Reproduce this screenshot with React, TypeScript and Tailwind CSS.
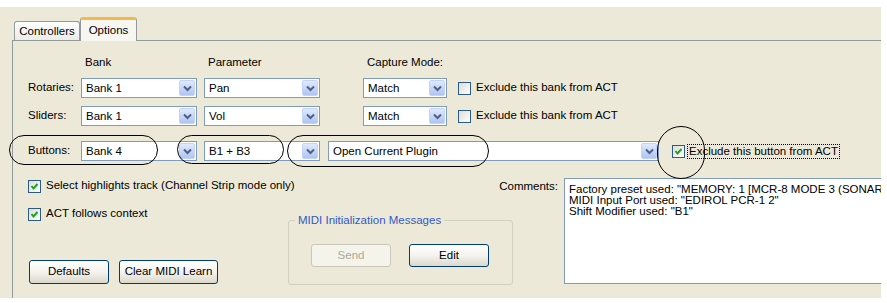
import React from "react";

function Arrow() {
  return (
    <div className="flex h-full w-[16px] items-center justify-center rounded-[2px] border border-[#C3D3FD] bg-gradient-to-b from-[#E1EAFE] to-[#AFC4F2]">
      <svg width="9" height="7" viewBox="0 0 9 7">
        <path d="M1 1.5 L4.5 5 L8 1.5" fill="none" stroke="#4D6185" strokeWidth="2" />
      </svg>
    </div>
  );
}

function Combo({ className, text }: { className: string; text: string }) {
  return (
    <div className={"flex h-[20px] shrink-0 items-stretch border border-[#7F9DB9] bg-white p-px " + className}>
      <span className="flex-1 pl-[3px] leading-[16px] whitespace-nowrap">{text}</span>
      <Arrow />
    </div>
  );
}

function Check({ checked }: { checked?: boolean }) {
  return (
    <div className="flex h-[13px] w-[13px] shrink-0 items-center justify-center border border-[#2D5B85] bg-gradient-to-br from-[#DCDCD7] to-white">
      {checked && (
        <svg width="9" height="9" viewBox="0 0 9 9">
          <path d="M1.5 4 L3.5 6.5 L7.5 2" stroke="#21A121" strokeWidth="2" fill="none" />
        </svg>
      )}
    </div>
  );
}

function Btn({ className, children }: { className: string; children: React.ReactNode }) {
  return (
    <div
      className={
        "flex shrink-0 items-center justify-center rounded-[3px] border border-[#003C74] bg-gradient-to-b from-white via-[#F4F3EE] to-[#DCD8CC] " +
        className
      }
    >
      {children}
    </div>
  );
}

export default function App() {
  return (
    <div className="relative h-[303px] w-[887px] overflow-hidden bg-white font-['Liberation_Sans',Arial,sans-serif] text-[11.5px] text-black">
      <div className="mt-[7px] flex h-[291px] w-[881px] flex-col overflow-hidden bg-[#ECE9D8]">
        {/* tabs */}
        <div className="flex h-[33px] shrink-0 items-end pl-[14px] pt-[10px]">
          <div className="flex h-[19px] w-[66px] items-center justify-center rounded-t-[3px] border border-b-0 border-[#919B9C] bg-gradient-to-b from-white to-[#ECEBE6] leading-[14px]">
            Controllers
          </div>
          <div className="relative z-10 -mb-px flex h-[24px] w-[57px] items-start justify-center rounded-t-[3px] border-x border-t-[3px] border-x-[#919B9C] border-t-[#F5B94A] bg-[#F7F6F1] pt-[3px] leading-[14px]">
            Options
          </div>
        </div>
        {/* pane */}
        <div className="ml-[12px] flex-1 border-l border-t border-[#919B9C] pl-[15px] pt-[14px]">
          {/* headers */}
          <div className="flex h-[14px] leading-[14px]">
            <div className="w-[53px] shrink-0" />
            <div className="w-[116px] shrink-0 pl-[4px]">Bank</div>
            <div className="ml-[7px] w-[116px] shrink-0 pl-[4px]">Parameter</div>
            <div className="ml-[43px] pl-[4px]">Capture Mode:</div>
          </div>
          {/* rotaries */}
          <div className="mt-[9px] flex h-[20px] items-center">
            <div className="w-[53px] shrink-0">Rotaries:</div>
            <Combo className="w-[116px]" text="Bank 1" />
            <Combo className="ml-[7px] w-[116px]" text="Pan" />
            <Combo className="ml-[43px] w-[84px]" text="Match" />
            <div className="ml-[11px]">
              <Check />
            </div>
            <span className="ml-[5px]">Exclude this bank from ACT</span>
          </div>
          {/* sliders */}
          <div className="mt-[8px] flex h-[20px] items-center">
            <div className="w-[53px] shrink-0">Sliders:</div>
            <Combo className="w-[116px]" text="Bank 1" />
            <Combo className="ml-[7px] w-[116px]" text="Vol" />
            <Combo className="ml-[43px] w-[84px]" text="Match" />
            <div className="ml-[11px]">
              <Check />
            </div>
            <span className="ml-[5px]">Exclude this bank from ACT</span>
          </div>
          {/* buttons */}
          <div className="mt-[15px] flex h-[20px] items-center">
            <div className="w-[53px] shrink-0">Buttons:</div>
            <Combo className="w-[116px]" text="Bank 4" />
            <Combo className="ml-[7px] w-[116px]" text="B1 + B3" />
            <Combo className="ml-[8px] w-[331px]" text="Open Current Plugin" />
            <div className="ml-[13px]">
              <Check checked />
            </div>
            <span className="ml-[2px] border border-dotted border-black px-px leading-[13px] whitespace-nowrap">Exclude this button from ACT</span>
          </div>
          {/* bottom */}
          <div className="mt-[17px] flex">
            <div className="w-[260px] shrink-0">
              <div className="flex h-[16px] items-center">
                <Check checked />
                <span className="ml-[5px] whitespace-nowrap">Select highlights track (Channel Strip mode only)</span>
              </div>
              <div className="mt-[12px] flex h-[16px] items-center">
                <Check checked />
                <span className="ml-[5px]">ACT follows context</span>
              </div>
              <div className="mt-[38px] flex">
                <Btn className="ml-[1px] h-[24px] w-[80px]">Defaults</Btn>
                <Btn className="ml-[10px] h-[24px] w-[99px]">Clear MIDI Learn</Btn>
              </div>
            </div>
            <div className="flex w-[276px] shrink-0 flex-col">
              <div className="h-[16px] pr-[6px] text-right leading-[16px]">Comments:</div>
              <fieldset className="mt-[19px] w-[225px] rounded-[3px] border border-[#D0D0BF]">
                <legend className="ml-[6px] px-[3px] leading-[14px] text-[#3457C8]">MIDI Initialization Messages</legend>
                <div className="flex pb-[17px] pl-[22px] pt-[17px]">
                  <div className="flex h-[23px] w-[80px] items-center justify-center rounded-[3px] border border-[#C9C7BA] bg-[#F5F4EA] text-[#ACA899]">
                    Send
                  </div>
                  <Btn className="ml-[18px] h-[23px] w-[80px]">Edit</Btn>
                </div>
              </fieldset>
            </div>
            <div className="h-[106px] w-[330px] shrink-0 overflow-hidden whitespace-nowrap border border-[#7F9DB9] bg-white px-[4px] pt-[5px] text-[11.5px] leading-[11px]">
              <div>Factory preset used: "MEMORY: 1 [MCR-8 MODE 3 (SONAR)]"</div>
              <div>MIDI Input Port used: "EDIROL PCR-1 2"</div>
              <div>Shift Modifier used: "B1"</div>
            </div>
          </div>
        </div>
      </div>
      {/* hand-drawn annotations */}
      <div className="absolute left-[9px] top-[135px] h-[30px] w-[149px] rounded-full border-[1.5px] border-black" />
      <div className="absolute left-[177px] top-[135px] h-[29px] w-[107px] rounded-full border-[1.5px] border-black" />
      <div className="absolute left-[287px] top-[135px] h-[32px] w-[202px] rounded-full border-[1.5px] border-black" />
      <div className="absolute left-[657px] top-[126px] h-[53px] w-[48px] rounded-full border-[1.5px] border-black" />
    </div>
  );
}
